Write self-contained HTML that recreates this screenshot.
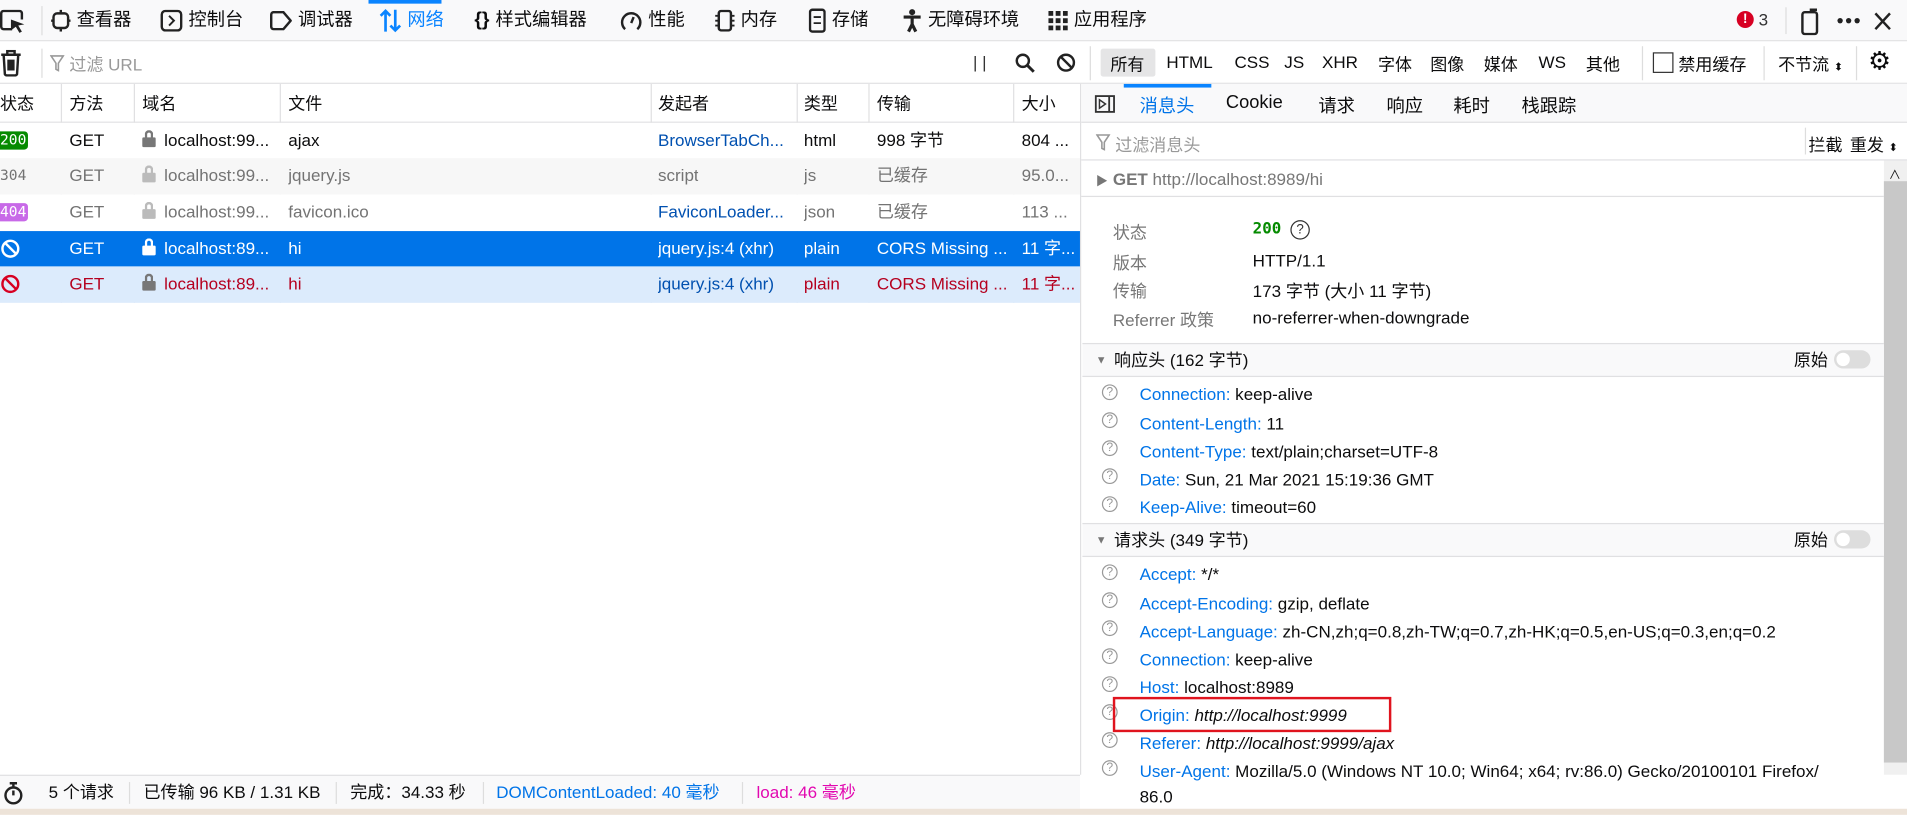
<!DOCTYPE html>
<html><head><meta charset="utf-8">
<style>
*{box-sizing:border-box;margin:0;padding:0}
html,body{width:1907px;height:815px;overflow:hidden;background:#fff}
#w{position:absolute;left:0;top:0;width:1568px;height:670px;transform:scale(1.2162);transform-origin:0 0;font-family:"Liberation Sans","Noto Sans CJK SC",sans-serif;font-size:14px;color:#0c0c0d}
.a{position:absolute;white-space:nowrap}
.tb{top:0;left:0;width:1568px;height:34px;background:#f9f9fa;border-bottom:1px solid #e0e0e2}
.ti{position:absolute;top:7px;font-size:15px;line-height:20px;display:flex;align-items:center;gap:5px}
.fb{top:34px;left:0;width:1568px;height:35px;background:#fff;border-bottom:1px solid #e0e0e2}
.row{position:absolute;left:0;width:888px;height:30px;line-height:29px}
.row span{position:absolute;white-space:nowrap;overflow:hidden}
.hdr{position:absolute;top:69px;left:0;width:888px;height:32px;background:#fff;border-bottom:1px solid #e0e0e2;line-height:32px}
.cl{position:absolute;top:69px;height:180px;border-left:1px solid #e0e0e2}
.rp{position:absolute;left:888px;top:69px;width:680px;height:568px;border-left:1px solid #e0e0e2;background:#fff}
.q{position:absolute;width:13px;height:13px;border:1px solid #999;border-radius:50%;font-size:10px;line-height:11px;text-align:center;color:#999}
.k{color:#0074e8}
.sec{position:absolute;left:1px;width:659px;height:28px;background:#f9f9fa;border-top:1px solid #e0e0e2;border-bottom:1px solid #e0e0e2;line-height:26px}
.tg{position:absolute;width:30px;height:15px;border-radius:8px;background:#ddd}
.tg:after{content:"";position:absolute;left:2px;top:2px;width:11px;height:11px;border-radius:50%;background:#fff}
.sb{position:absolute;top:637px;left:0;width:888px;height:28px;background:#f9f9fa;border-top:1px solid #e0e0e2;line-height:27px}
.sb span{position:absolute}
.sep{position:absolute;top:5px;height:18px;border-left:1px solid #ddd}
.lk{display:inline-block;width:11px;height:8px;border-radius:1px;margin-top:12px;position:relative}
.lk:before{content:"";position:absolute;left:2px;top:-6px;width:7px;height:8px;border:2px solid currentColor;border-bottom:none;border-radius:4px 4px 0 0;box-sizing:border-box}
.nb{top:7px;width:15px;height:15px;border:2px solid;border-radius:50%}
.nb:after{content:"";position:absolute;left:4.5px;top:-1px;width:2px;height:13px;background:currentColor;transform:rotate(-45deg)}
</style></head><body><div id="w">
<div class="a tb"></div>
<svg class="a" style="left:0;top:8px" width="22" height="20" viewBox="0 0 22 20"><path d="M10 16H3a2 2 0 0 1-2-2V3a2 2 0 0 1 2-2h13a2 2 0 0 1 2 2v5" fill="none" stroke="#222" stroke-width="2"/><path d="M9 8l11 4-5 1 3 5-2 1-3-5-4 3z" fill="#222"/></svg>
<div class="a" style="left:34px;top:5px;height:24px;border-left:1px solid #ddd"></div>
<div class="ti" style="left:42px"><svg width="16" height="18" viewBox="0 0 16 18"><rect x="2" y="3" width="12" height="12" rx="3" fill="none" stroke="#222" stroke-width="2"/><path d="M8 0v3M8 15v3M0 9h2M14 9h2" stroke="#222" stroke-width="2"/></svg>查看器</div>
<div class="ti" style="left:132px"><svg width="18" height="18" viewBox="0 0 18 18"><rect x="1" y="1" width="16" height="16" rx="3" fill="none" stroke="#222" stroke-width="2"/><path d="M7 5l4 4-4 4" fill="none" stroke="#222" stroke-width="1.6"/></svg>控制台</div>
<div class="ti" style="left:222px"><svg width="18" height="16" viewBox="0 0 18 16"><path d="M3 1h8l6 7-6 7H3a2 2 0 0 1-2-2V3a2 2 0 0 1 2-2z" fill="none" stroke="#222" stroke-width="2"/></svg>调试器</div>
<div class="a" style="left:303px;top:0;width:60px;height:3px;background:#0a84ff"></div>
<div class="ti" style="left:312px;color:#0a84ff"><svg width="18" height="20" viewBox="0 0 18 20"><path d="M5 19V2M1 6l4-4 4 4M13 1v17M9 14l4 4 4-4" fill="none" stroke="#0a84ff" stroke-width="2.2"/></svg>网络</div>
<div class="ti" style="left:390px"><b style="font-size:16px">{}</b>样式编辑器</div>
<div class="ti" style="left:510px"><svg width="18" height="18" viewBox="0 0 18 18"><path d="M4 16A7.5 7.5 0 1 1 14 16" fill="none" stroke="#222" stroke-width="2"/><path d="M9 11l2-5" stroke="#222" stroke-width="2"/></svg>性能</div>
<div class="ti" style="left:588px"><svg width="16" height="18" viewBox="0 0 16 18"><rect x="3" y="1" width="10" height="16" rx="2" fill="none" stroke="#222" stroke-width="2"/><path d="M0 5h3M0 9h3M0 13h3M13 5h3M13 9h3M13 13h3" stroke="#222" stroke-width="1.5"/></svg>内存</div>
<div class="ti" style="left:665px"><svg width="14" height="20" viewBox="0 0 14 20"><rect x="1" y="1" width="12" height="18" rx="2" fill="none" stroke="#222" stroke-width="2"/><path d="M4 7h6M4 12h6" stroke="#222" stroke-width="1.5"/></svg>存储</div>
<div class="ti" style="left:742px"><svg width="16" height="20" viewBox="0 0 16 20"><circle cx="8" cy="3" r="2.5" fill="#222"/><path d="M1 7h14M8 7v6M5 19l3-6 3 6" fill="none" stroke="#222" stroke-width="2.6"/></svg>无障碍环境</div>
<div class="ti" style="left:862px"><svg width="16" height="16" viewBox="0 0 16 16" fill="#222"><rect x="0" y="0" width="4" height="4"/><rect x="6" y="0" width="4" height="4"/><rect x="12" y="0" width="4" height="4"/><rect x="0" y="6" width="4" height="4"/><rect x="6" y="6" width="4" height="4"/><rect x="12" y="6" width="4" height="4"/><rect x="0" y="12" width="4" height="4"/><rect x="6" y="12" width="4" height="4"/><rect x="12" y="12" width="4" height="4"/></svg>应用程序</div>
<div class="a" style="left:1428px;top:9px;width:14px;height:14px;border-radius:50%;background:#d70022;color:#fff;font-size:11px;font-weight:bold;text-align:center;line-height:14px">!</div>
<div class="a" style="left:1446px;top:8px;font-size:14px;color:#333">3</div>
<div class="a" style="left:1468px;top:6px;height:22px;border-left:1px solid #ddd"></div>
<svg class="a" style="left:1479px;top:7px" width="18" height="22" viewBox="0 0 18 22"><path d="M5 3h8a2 2 0 0 1 2 2v14a2 2 0 0 1-2 2H5a2 2 0 0 1-2-2V5a2 2 0 0 1 2-2z M9 1h6" fill="none" stroke="#222" stroke-width="2"/></svg>
<svg class="a" style="left:1510px;top:14px" width="22" height="6"><circle cx="3" cy="3" r="2.2" fill="#222"/><circle cx="10" cy="3" r="2.2" fill="#222"/><circle cx="17" cy="3" r="2.2" fill="#222"/></svg>
<svg class="a" style="left:1541px;top:10px" width="14" height="15"><path d="M1 1l12 13M13 1L1 14" stroke="#222" stroke-width="2"/></svg>

<div class="a fb"></div>
<svg class="a" style="left:0;top:41px" width="18" height="22" viewBox="0 0 18 22"><path d="M1 4h16M6 4V1h6v3M3 4l1 16a2 2 0 0 0 2 1h6a2 2 0 0 0 2-1l1-16M7 8v9M9 8v9M11 8v9" fill="none" stroke="#222" stroke-width="2"/></svg>
<div class="a" style="left:34px;top:40px;height:24px;border-left:1px solid #ddd"></div>
<svg class="a" style="left:41px;top:45px" width="12" height="14"><path d="M1 1h10L7 7v6L5 12V7z" fill="none" stroke="#999" stroke-width="1.3"/></svg>
<div class="a" style="left:57px;top:43px;color:#999;font-size:14px">过滤 URL</div>
<div class="a" style="left:800px;top:43px;color:#333">| |</div>
<svg class="a" style="left:834px;top:43px" width="17" height="17"><circle cx="7" cy="7" r="5" fill="none" stroke="#222" stroke-width="2"/><path d="M11 11l5 5" stroke="#222" stroke-width="2.4"/></svg>
<div class="a" style="left:869px;top:44px;width:15px;height:15px;border:2px solid #222;border-radius:50%"><div style="position:absolute;left:4.5px;top:-1px;width:2px;height:13px;background:#222;transform:rotate(-45deg)"></div></div>
<div class="a" style="left:896px;top:38px;height:28px;border-left:1px solid #ddd"></div>
<div class="a" style="left:905px;top:40px;width:45px;height:23px;background:#e5e5e6;border-radius:2px"></div>
<div class="a" style="left:913px;top:43px">所有</div>
<div class="a" style="left:959px;top:43px">HTML</div>
<div class="a" style="left:1015px;top:43px">CSS</div>
<div class="a" style="left:1056px;top:43px">JS</div>
<div class="a" style="left:1087px;top:43px">XHR</div>
<div class="a" style="left:1133px;top:43px">字体</div>
<div class="a" style="left:1176px;top:43px">图像</div>
<div class="a" style="left:1220px;top:43px">媒体</div>
<div class="a" style="left:1265px;top:43px">WS</div>
<div class="a" style="left:1304px;top:43px">其他</div>
<div class="a" style="left:1350px;top:38px;height:28px;border-left:1px solid #ddd"></div>
<div class="a" style="left:1359px;top:43px;width:17px;height:17px;border:1px solid #333"></div>
<div class="a" style="left:1380px;top:43px">禁用缓存</div>
<div class="a" style="left:1450px;top:38px;height:28px;border-left:1px solid #ddd"></div>
<div class="a" style="left:1462px;top:43px">不节流 <span style="font-size:9px">⬍</span></div>
<div class="a" style="left:1526px;top:38px;height:28px;border-left:1px solid #ddd"></div>
<div class="a" style="left:1536px;top:38px;font-size:21px">⚙</div>

<div class="hdr">
<span class="a" style="left:0">状态</span><span class="a" style="left:57px">方法</span><span class="a" style="left:117px">域名</span><span class="a" style="left:237px">文件</span><span class="a" style="left:541px">发起者</span><span class="a" style="left:661px">类型</span><span class="a" style="left:721px">传输</span><span class="a" style="left:840px">大小</span>
</div>
<div class="cl" style="left:50px"></div><div class="cl" style="left:110px"></div><div class="cl" style="left:230px"></div><div class="cl" style="left:535px"></div><div class="cl" style="left:655px"></div><div class="cl" style="left:714px"></div><div class="cl" style="left:833px"></div>

<div class="row" style="top:101px;background:#fff">
<span style="left:0;top:7px;height:15px;line-height:15px;width:23px;background:#058b00;color:#fff;font-size:12px;border-radius:0 3px 3px 0;font-family:'DejaVu Sans Mono',monospace">200</span>
<span style="left:57px">GET</span><span class="lk" style="left:117px;color:#777;background:#777;overflow:visible"></span><span style="left:135px;width:92px">localhost:99...</span><span style="left:237px">ajax</span><span style="left:541px;color:#0050b0;width:112px">BrowserTabCh...</span><span style="left:661px">html</span><span style="left:721px">998 字节</span><span style="left:840px">804 ...</span></div>
<div class="row" style="top:130px;background:#f7f7f7;color:#737373">
<span style="left:0;font-size:12px;font-family:'DejaVu Sans Mono',monospace">304</span>
<span style="left:57px">GET</span><span class="lk" style="left:117px;color:#bbb;background:#bbb;overflow:visible"></span><span style="left:135px;width:92px">localhost:99...</span><span style="left:237px">jquery.js</span><span style="left:541px">script</span><span style="left:661px">js</span><span style="left:721px">已缓存</span><span style="left:840px">95.0...</span></div>
<div class="row" style="top:160px;background:#fff;color:#737373">
<span style="left:0;top:7px;height:15px;line-height:15px;width:23px;background:#c869e8;color:#fff;font-size:12px;border-radius:0 3px 3px 0;font-family:'DejaVu Sans Mono',monospace">404</span>
<span style="left:57px">GET</span><span class="lk" style="left:117px;color:#bbb;background:#bbb;overflow:visible"></span><span style="left:135px;width:92px">localhost:99...</span><span style="left:237px">favicon.ico</span><span style="left:541px;color:#0050b0;width:112px">FaviconLoader...</span><span style="left:661px">json</span><span style="left:721px">已缓存</span><span style="left:840px">113 ...</span></div>
<div class="row" style="top:190px;background:#0074e8;color:#fff">
<span class="nb" style="left:1px;color:#fff;overflow:visible"></span>
<span style="left:57px">GET</span><span class="lk" style="left:117px;color:#fff;background:#fff;overflow:visible"></span><span style="left:135px;width:92px">localhost:89...</span><span style="left:237px">hi</span><span style="left:541px">jquery.js:4 (xhr)</span><span style="left:661px">plain</span><span style="left:721px;width:110px">CORS Missing ...</span><span style="left:840px">11 字...</span></div>
<div class="row" style="top:219px;background:#dcebfc;color:#b5001f">
<span class="nb" style="left:1px;color:#d70022;overflow:visible"></span>
<span style="left:57px">GET</span><span class="lk" style="left:117px;color:#777;background:#777;overflow:visible"></span><span style="left:135px;width:92px">localhost:89...</span><span style="left:237px">hi</span><span style="left:541px;color:#0050b0">jquery.js:4 (xhr)</span><span style="left:661px">plain</span><span style="left:721px;width:110px">CORS Missing ...</span><span style="left:840px">11 字...</span></div>

<div class="sb">
<svg style="position:absolute;left:3px;top:5px" width="16" height="19" viewBox="0 0 16 19"><circle cx="8" cy="11" r="6.5" fill="none" stroke="#222" stroke-width="2"/><path d="M5 1h6M8 1v3M8 11V7" stroke="#222" stroke-width="2"/></svg>
<span style="left:40px">5 个请求</span><div class="sep" style="left:106px"></div>
<span style="left:118px">已传输 96 KB / 1.31 KB</span><div class="sep" style="left:276px"></div>
<span style="left:288px">完成：34.33 秒</span><div class="sep" style="left:397px"></div>
<span style="left:408px;color:#0074e8">DOMContentLoaded: 40 毫秒</span><div class="sep" style="left:610px"></div>
<span style="left:622px;color:#e208b0">load: 46 毫秒</span>
</div>
<div class="a" style="left:0;top:665px;width:1568px;height:5px;background:#ede3d8"></div>

<div class="rp">
<div class="a" style="left:0;top:0;width:679px;height:32px;background:#f9f9fa;border-bottom:1px solid #e0e0e2"></div>
<svg class="a" style="left:11px;top:9px" width="17" height="15"><rect x="1" y="1" width="15" height="13" fill="none" stroke="#333" stroke-width="1.5"/><path d="M4 4l5 3.5L4 11z" fill="none" stroke="#333" stroke-width="1.2"/><path d="M12 1v13" stroke="#333" stroke-width="1.5"/></svg>
<div class="a" style="left:35px;top:0;width:72px;height:3px;background:#0a84ff"></div>
<div class="a" style="left:48px;top:7px;color:#0074e8;font-size:15px">消息头</div>
<div class="a" style="left:119px;top:7px;font-size:15px">Cookie</div>
<div class="a" style="left:195px;top:7px;font-size:15px">请求</div>
<div class="a" style="left:251px;top:7px;font-size:15px">响应</div>
<div class="a" style="left:306px;top:7px;font-size:15px">耗时</div>
<div class="a" style="left:362px;top:7px;font-size:15px">栈跟踪</div>
<div class="a" style="left:0;top:32px;width:679px;height:31px;border-bottom:1px solid #e0e0e2"></div>
<svg class="a" style="left:12px;top:41px" width="12" height="14"><path d="M1 1h10L7 7v6L5 12V7z" fill="none" stroke="#999" stroke-width="1.3"/></svg>
<div class="a" style="left:28px;top:40px;color:#999">过滤消息头</div>
<div class="a" style="left:595px;top:36px;height:22px;border-left:1px solid #ddd"></div>
<div class="a" style="left:598px;top:40px">拦截</div>
<div class="a" style="left:632px;top:40px">重发 <span style="font-size:9px">⬍</span></div>
<div class="a" style="left:660px;top:63px;width:20px;height:505px;background:#f0f0f0"></div>
<div class="a" style="left:660px;top:80px;width:20px;height:478px;background:#c8c8c8"></div>
<div class="a" style="left:664px;top:66px;font-size:10px">∧</div>
<div class="a" style="left:0;top:63px;width:660px;height:30px;border-bottom:1px solid #e0e0e2"></div>
<div class="a" style="left:12px;top:71px;color:#777;font-size:10px">▶</div>
<div class="a" style="left:26px;top:70px;color:#777"><b>GET</b> http://localhost:8989/hi</div>
<div class="a" style="left:26px;top:112px;color:#777">状态</div><div class="a" style="left:141px;top:112px;color:#058b00;font-weight:bold;font-family:'DejaVu Sans Mono',monospace;font-size:13px">200</div><div class="q" style="left:172px;top:112px;border-color:#333;color:#333;width:16px;height:16px;line-height:14px;font-size:11px">?</div>
<div class="a" style="left:26px;top:137px;color:#777">版本</div><div class="a" style="left:141px;top:137px">HTTP/1.1</div>
<div class="a" style="left:26px;top:160px;color:#777">传输</div><div class="a" style="left:141px;top:160px">173 字节 (大小 11 字节)</div>
<div class="a" style="left:26px;top:184px;color:#777">Referrer 政策</div><div class="a" style="left:141px;top:184px">no-referrer-when-downgrade</div>

<div class="sec" style="top:213px"><span style="position:absolute;left:11px;color:#777;font-size:9px">▼</span><span style="position:absolute;left:26px">响应头 (162 字节)</span><span style="position:absolute;left:585px">原始</span><div class="tg" style="left:618px;top:5px"></div></div>
<div class="q" style="left:17px;top:247px">?</div><div class="a" style="left:48px;top:247px"><span class="k">Connection:</span> keep-alive</div>
<div class="q" style="left:17px;top:270px">?</div><div class="a" style="left:48px;top:271px"><span class="k">Content-Length:</span> 11</div>
<div class="q" style="left:17px;top:293px">?</div><div class="a" style="left:48px;top:294px"><span class="k">Content-Type:</span> text/plain;charset=UTF-8</div>
<div class="q" style="left:17px;top:316px">?</div><div class="a" style="left:48px;top:317px"><span class="k">Date:</span> Sun, 21 Mar 2021 15:19:36 GMT</div>
<div class="q" style="left:17px;top:339px">?</div><div class="a" style="left:48px;top:340px"><span class="k">Keep-Alive:</span> timeout=60</div>

<div class="sec" style="top:361px"><span style="position:absolute;left:11px;color:#777;font-size:9px">▼</span><span style="position:absolute;left:26px">请求头 (349 字节)</span><span style="position:absolute;left:585px">原始</span><div class="tg" style="left:618px;top:5px"></div></div>
<div class="q" style="left:17px;top:395px">?</div><div class="a" style="left:48px;top:395px"><span class="k">Accept:</span> */*</div>
<div class="q" style="left:17px;top:418px">?</div><div class="a" style="left:48px;top:419px"><span class="k">Accept-Encoding:</span> gzip, deflate</div>
<div class="q" style="left:17px;top:441px">?</div><div class="a" style="left:48px;top:442px"><span class="k">Accept-Language:</span> zh-CN,zh;q=0.8,zh-TW;q=0.7,zh-HK;q=0.5,en-US;q=0.3,en;q=0.2</div>
<div class="q" style="left:17px;top:464px">?</div><div class="a" style="left:48px;top:465px"><span class="k">Connection:</span> keep-alive</div>
<div class="q" style="left:17px;top:487px">?</div><div class="a" style="left:48px;top:488px"><span class="k">Host:</span> localhost:8989</div>
<div class="q" style="left:17px;top:510px">?</div><div class="a" style="left:48px;top:511px"><span class="k">Origin:</span> <i>http://localhost:9999</i></div>
<div class="a" style="left:26px;top:504px;width:229px;height:29px;border:2px solid #e0141e"></div>
<div class="q" style="left:17px;top:533px">?</div><div class="a" style="left:48px;top:534px"><span class="k">Referer:</span> <i>http://localhost:9999/ajax</i></div>
<div class="q" style="left:17px;top:556px">?</div><div class="a" style="left:48px;top:557px"><span class="k">User-Agent:</span> Mozilla/5.0 (Windows NT 10.0; Win64; x64; rv:86.0) Gecko/20100101 Firefox/</div>
<div class="a" style="left:48px;top:578px;background:#fff">86.0</div>
</div>
</div></body></html>
